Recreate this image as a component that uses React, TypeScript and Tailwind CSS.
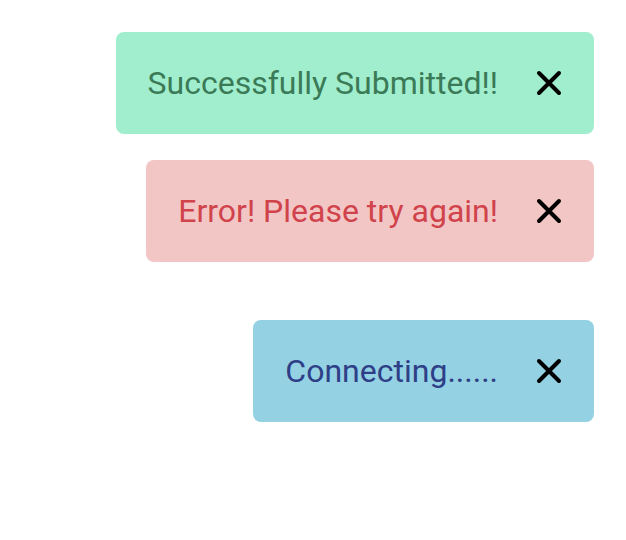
import React from "react";

function CloseIcon() {
  return (
    <svg width="26" height="26" viewBox="0 0 26 26" className="block">
      <path d="M3 3 L23 23 M23 3 L3 23" stroke="#000" strokeWidth="4" strokeLinecap="round" fill="none" />
    </svg>
  );
}

function Toast({ text, bg, fg, className = "" }: { text: string; bg: string; fg: string; className?: string }) {
  return (
    <div className={`flex items-center h-[102px] pl-8 pr-8 rounded-lg ${bg} ${className}`}>
      <span className={`text-[32px] leading-none ${fg}`} style={{ fontFamily: "Roboto, sans-serif" }}>
        {text}
      </span>
      <button className="ml-[38px] flex items-center justify-center">
        <CloseIcon />
      </button>
    </div>
  );
}

export default function App() {
  return (
    <div className="w-[626px] h-[540px] bg-white flex flex-col items-end pt-8 pr-8">
      <Toast text="Successfully Submitted!!" bg="bg-[#a0eecd]" fg="text-[#3b7a57]" />
      <Toast text="Error! Please try again!" bg="bg-[#f3c6c6]" fg="text-[#d0434b]" className="mt-[26px]" />
      <Toast text="Connecting......" bg="bg-[#93d1e3]" fg="text-[#2e3e87]" className="mt-[58px]" />
    </div>
  );
}
